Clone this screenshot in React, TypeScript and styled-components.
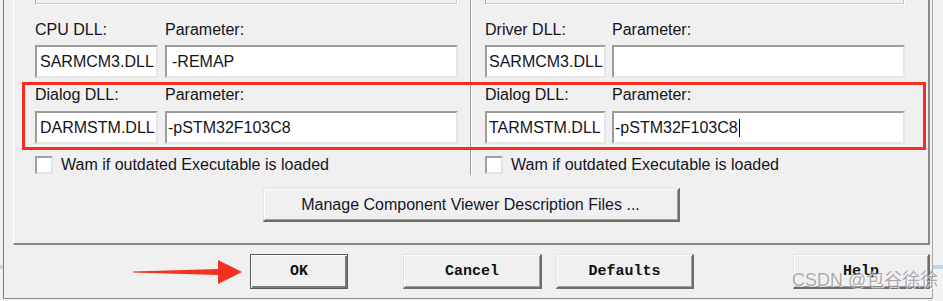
import React from 'react'
import styled, { createGlobalStyle } from 'styled-components'

const GlobalStyle = createGlobalStyle`
  html, body {
    margin: 0;
    padding: 0;
    background: #f5f6f8;
  }
  body {
    font-family: "Liberation Sans", Arial, sans-serif;
    color: #14141c;
  }
`

const Screen = styled.div`
  position: relative;
  width: 943px;
  height: 301px;
  overflow: hidden;
  display: flex;
  align-items: flex-start;
  background: #f5f6f8;
`

const Desk = styled.div<{ $w: number }>`
  flex: none;
  width: ${p => p.$w}px;
  height: 301px;
  background: linear-gradient(
    to bottom,
    #f1f2f4 0,
    #f1f2f4 265px,
    #c3d3e6 265px,
    #c3d3e6 269px,
    #f1f2f4 269px
  );
`

const Window = styled.div`
  flex: none;
  box-sizing: border-box;
  width: 930px;
  height: 299px;
  border-left: 1px solid #7c7c7c;
  border-right: 1px solid #a9a9a9;
  border-bottom: 1px solid #888;
  background: #f0f0f0;
  padding: 0 2px 0 9px;
  display: flex;
  flex-direction: column;
`

const TabPage = styled.div`
  box-sizing: border-box;
  width: 917px;
  height: 245px;
  border-left: 1px solid #fff;
  border-right: 2px solid #8a8a8a;
  border-bottom: 2px solid #8a8a8a;
  display: flex;
  flex-direction: column;
`

const Columns = styled.div`
  display: flex;
  height: 175px;
`

const Column = styled.div<{ $w: number; $ml: number }>`
  width: ${p => p.$w}px;
  margin-left: ${p => p.$ml}px;
  display: flex;
  flex-direction: column;
`

const Separator = styled.div`
  width: 0;
  margin-left: 12px;
  border-left: 1px solid #a0a0a0;
  border-right: 1px solid #fff;
`

const TopStub = styled.div`
  box-sizing: border-box;
  height: 5px;
  border-left: 1px solid #b0b0b0;
  border-right: 1px solid #fff;
  border-bottom: 1px solid #fff;
  box-shadow: inset -1px -1px 0 #c9c9c9, inset 1px 0 0 #fff;
`

const FieldGrid = styled.div<{ $cols: string; $gap: number; $mt: number }>`
  display: grid;
  grid-template-columns: ${p => p.$cols};
  column-gap: ${p => p.$gap}px;
  margin-top: ${p => p.$mt}px;
`

const Label = styled.div`
  font-size: 16px;
  line-height: 18px;
  white-space: nowrap;
`

const Edit = styled.div<{ $pad?: number }>`
  box-sizing: border-box;
  height: 33px;
  background: #fff;
  border-style: solid;
  border-width: 2px;
  border-color: #9c9c9c #e6e6e6 #e6e6e6 #9c9c9c;
  padding-left: ${p => p.$pad ?? 3}px;
  font-size: 16px;
  line-height: 29px;
  white-space: nowrap;
  overflow: hidden;
  display: flex;
  align-items: center;
`

const Caret = styled.span`
  display: inline-block;
  width: 0;
  height: 18px;
  border-left: 1px solid #000;
  margin-left: 1px;
`

const CheckRow = styled.label`
  display: flex;
  align-items: center;
  margin-top: 12px;
  height: 18px;
  font-size: 16px;
  white-space: nowrap;
`

const CheckBox = styled.span`
  box-sizing: border-box;
  flex: none;
  width: 18px;
  height: 18px;
  background: #fff;
  border-style: solid;
  border-width: 2px;
  border-color: #a0a0a0 #e3e3e3 #e3e3e3 #a0a0a0;
  margin-right: 8px;
`

const RaisedButton = styled.button<{ $w: number; $ml?: number; $default?: boolean; $mono?: boolean }>`
  box-sizing: border-box;
  flex: none;
  width: ${p => p.$w}px;
  margin-left: ${p => p.$ml ?? 0}px;
  padding: 0;
  background: #f0f0f0;
  border-style: solid;
  border-width: ${p => (p.$default ? '1px' : '1px 2px 2px 1px')};
  border-color: ${p => (p.$default ? '#5a5a5a' : '#e3e3e3 #6e6e6e #6e6e6e #e3e3e3')};
  box-shadow: ${p =>
    p.$default
      ? 'inset 1px 1px 0 #fff, inset -2px -2px 0 #7a7a7a'
      : 'inset 1px 1px 0 #fff, inset -1px -1px 0 #a0a0a0'};
  color: #111;
  font-family: ${p => (p.$mono ? '"Liberation Mono", "Courier New", monospace' : '"Liberation Sans", Arial, sans-serif')};
  font-weight: ${p => (p.$mono ? 700 : 400)};
  font-size: ${p => (p.$mono ? 15 : 16)}px;
  cursor: default;
`

const ManageButton = styled(RaisedButton)`
  align-self: center;
  margin-top: 13px;
  height: 34px;
  color: #15152a;
`

const ButtonRow = styled.div`
  display: flex;
  margin-top: 9px;
  height: 35px;
`

const Highlight = styled.div`
  position: absolute;
  left: 22px;
  top: 82px;
  width: 904px;
  height: 68px;
  box-sizing: border-box;
  border: 3px solid #f72d1b;
  pointer-events: none;
`

const ArrowMark = styled.svg`
  position: absolute;
  left: 130px;
  top: 258px;
`

const Watermark = styled.div`
  position: absolute;
  left: 792px;
  top: 269px;
  font-family: "Liberation Sans", "Noto Sans CJK SC", sans-serif;
  font-size: 18px;
  line-height: 22px;
  color: rgba(120, 120, 120, 0.6);
  text-shadow: 1px 1px 0 rgba(255, 255, 255, 0.7);
  white-space: nowrap;
  pointer-events: none;
`

type Side = {
  cols: string
  gap: number
  first: [string, string]
  firstValues: [React.ReactNode, React.ReactNode]
  secondValues: [React.ReactNode, React.ReactNode]
  pads: [number, number, number, number]
}

const DllColumn = ({ side }: { side: Side }) => (
  <>
    <TopStub />
    <FieldGrid $cols={side.cols} $gap={side.gap} $mt={16}>
      <Label>{side.first[0]}</Label>
      <Label>{side.first[1]}</Label>
    </FieldGrid>
    <FieldGrid $cols={side.cols} $gap={side.gap} $mt={6}>
      <Edit $pad={side.pads[0]}>{side.firstValues[0]}</Edit>
      <Edit $pad={side.pads[1]}>{side.firstValues[1]}</Edit>
    </FieldGrid>
    <FieldGrid $cols={side.cols} $gap={side.gap} $mt={8}>
      <Label>Dialog DLL:</Label>
      <Label>Parameter:</Label>
    </FieldGrid>
    <FieldGrid $cols={side.cols} $gap={side.gap} $mt={7}>
      <Edit $pad={side.pads[2]}>{side.secondValues[0]}</Edit>
      <Edit $pad={side.pads[3]}>{side.secondValues[1]}</Edit>
    </FieldGrid>
    <CheckRow>
      <CheckBox />
      Wam if outdated Executable is loaded
    </CheckRow>
  </>
)

const leftSide: Side = {
  cols: '123px 293px',
  gap: 7,
  first: ['CPU DLL:', 'Parameter:'],
  firstValues: ['SARMCM3.DLL', '-REMAP'],
  secondValues: ['DARMSTM.DLL', '-pSTM32F103C8'],
  pads: [3, 5, 3, 1],
}

const rightSide: Side = {
  cols: '121px 293px',
  gap: 6,
  first: ['Driver DLL:', 'Parameter:'],
  firstValues: ['SARMCM3.DLL', ''],
  secondValues: [
    'TARMSTM.DLL',
    <>
      -pSTM32F103C8
      <Caret />
    </>,
  ],
  pads: [2, 3, 2, 1],
}

const App = () => {
  return (
    <Screen>
      <GlobalStyle />
      <Desk $w={3} />
      <Window>
        <TabPage>
          <Columns>
            <Column $w={423} $ml={21}>
              <DllColumn side={leftSide} />
            </Column>
            <Separator />
            <Column $w={420} $ml={13}>
              <DllColumn side={rightSide} />
            </Column>
          </Columns>
          <ManageButton $w={417}>Manage Component Viewer Description Files ...</ManageButton>
        </TabPage>
        <ButtonRow>
          <RaisedButton $w={98} $ml={237} $default $mono>OK</RaisedButton>
          <RaisedButton $w={139} $ml={55} $mono>Cancel</RaisedButton>
          <RaisedButton $w={138} $ml={14} $mono>Defaults</RaisedButton>
          <RaisedButton $w={137} $ml={99} $mono>Help</RaisedButton>
        </ButtonRow>
      </Window>
      <Desk $w={10} />

      <Highlight />
      <ArrowMark width="116" height="28" viewBox="0 0 116 28">
        <polygon
          points="3,13.6 88,11 88,2 112,14 88,26 88,17 3,14.4"
          fill="#f4301f"
        />
      </ArrowMark>
      <Watermark>CSDN @包谷徐徐</Watermark>
    </Screen>
  )
}

export default App
